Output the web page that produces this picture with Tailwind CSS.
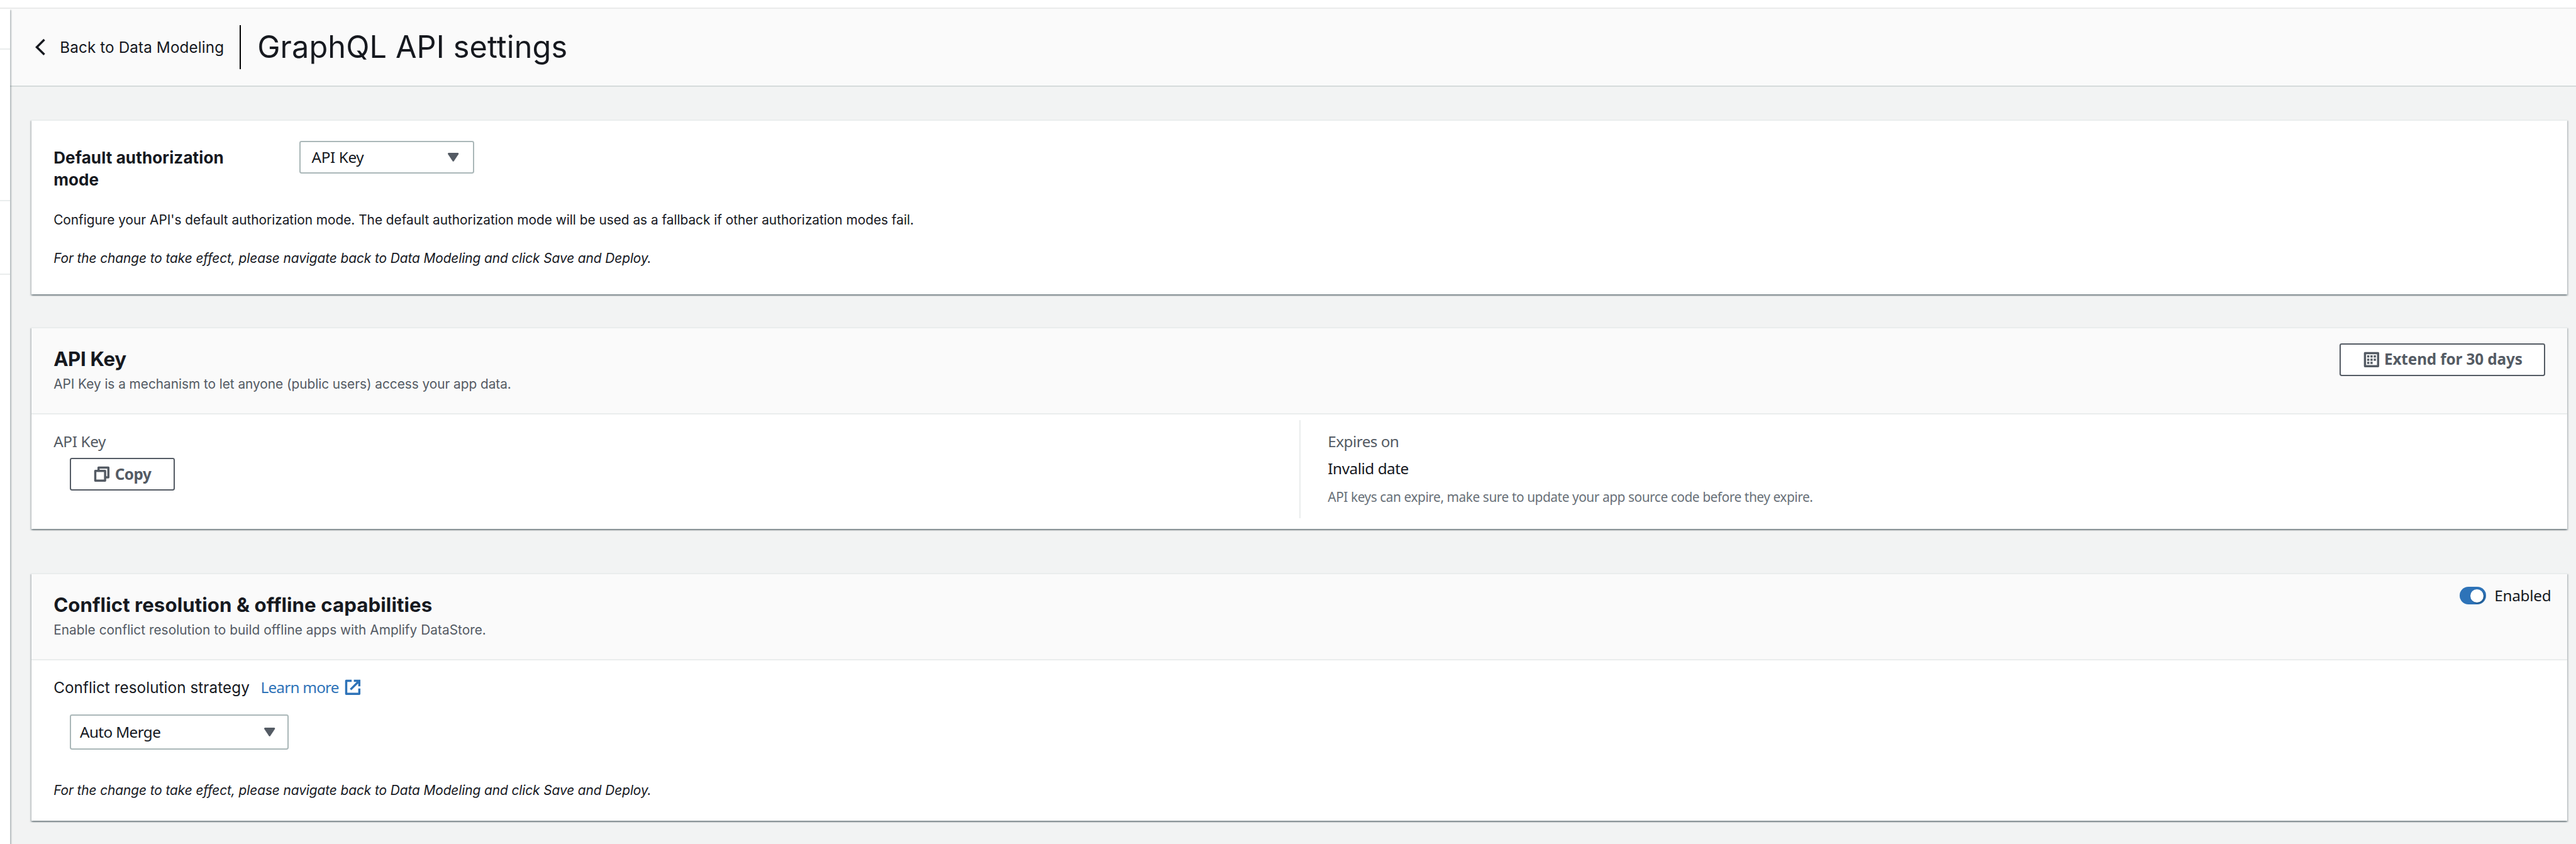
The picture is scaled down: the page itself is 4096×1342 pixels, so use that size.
<!DOCTYPE html>
<html lang="en">
<head>
<meta charset="utf-8">
<title>GraphQL API settings</title>
<script src="https://cdn.jsdelivr.net/npm/@tailwindcss/browser@4"></script>
</head>
<body class="overflow-hidden bg-white">
<div class="[zoom:1.7378] flex h-[773px] w-[2357px] flex-col overflow-hidden bg-[#f2f3f3] font-['Inter',sans-serif] text-sm/5 text-[#16191f]">
  <div class="h-[8.2px] shrink-0 border-b-[1.2px] border-[#eaebeb] bg-white"></div>
  <div class="flex min-h-0 flex-1">

    <!-- collapsed side navigation -->
    <nav class="z-10 flex w-[9px] shrink-0 flex-col bg-white shadow-[1px_1px_1px_0_rgba(0,28,36,0.25)]">
      <div class="h-[37px] border-b-[1.2px] border-[#eaeded]"></div>
      <div class="h-[139px] border-b-[1.2px] border-[#eaeded]"></div>
      <div class="h-[67px] border-b-[1.2px] border-[#eaeded]"></div>
    </nav>

    <div class="min-w-0 flex-1">
      <header class="flex h-[71px] items-center border-b-[1.2px] border-[#d5dbdb] bg-[#fafafa] pl-5">
        <svg class="size-4 shrink-0" viewBox="0 0 16 16" fill="none" stroke="#16191f" stroke-width="2"><path d="M11.8 1.2 4.9 8l6.9 6.8"/></svg>
        <a class="ml-[9.8px] w-[164.7px] whitespace-nowrap tracking-[0.05px]">Back to Data Modeling</a>
        <span class="h-10 w-[1.2px] bg-black"></span>
        <h1 class="ml-[14.8px] text-[28px] leading-9 tracking-[0.063px] whitespace-nowrap">GraphQL API settings</h1>
      </header>

      <main class="pt-[30px] pr-2 pl-5">
        <section class="h-[160px] border-t-[1.2px] border-[#eaeded] bg-white px-5 pt-[18.7px] shadow-[0_1px_1px_0_rgba(0,28,36,0.3),1px_1px_1px_0_rgba(0,28,36,0.15),-1px_1px_1px_0_rgba(0,28,36,0.15)]">
          <div class="flex items-start">
            <h3 class="mr-[45px] w-[180px] pt-[5.6px] text-[15px] leading-5 font-bold tracking-[0.061px]">Default authorization mode</h3>
            <div class="flex h-[30px] w-[160px] items-center justify-between rounded-[2px] border-[1.2px] border-[#aab7b8] bg-white pr-[13px] pl-[10px] font-['Noto_Sans',sans-serif]">
              <span class="tracking-[-0.22px]">API Key</span>
              <svg class="h-2 w-[10px]" viewBox="0 0 10 8" fill="#545b64"><path d="M.7 0h8.6q1 .3.5 1.3L5.6 7.6q-.6.7-1.2 0L.2 1.3Q-.3.3.7 0Z"/></svg>
            </div>
          </div>
          <p class="mt-[17.1px] text-xs/5 tracking-[-0.014px]">Configure your API's default authorization mode. The default authorization mode will be used as a fallback if other authorization modes fail.</p>
          <p class="mt-[15px] text-xs/5 tracking-[-0.043px] italic">For the change to take effect, please navigate back to Data Modeling and click Save and Deploy.</p>
        </section>

        <section class="mt-[30px] h-[185px] border-t-[1.2px] border-[#eaeded] bg-white shadow-[0_1px_1px_0_rgba(0,28,36,0.3),1px_1px_1px_0_rgba(0,28,36,0.15),-1px_1px_1px_0_rgba(0,28,36,0.15)]">
          <div class="flex h-[79px] items-start justify-between border-b-[1.2px] border-[#eaeded] bg-[#fafafa] px-5">
            <div class="pt-[17px]">
              <h2 class="text-lg/6 font-bold tracking-[-0.2px]">API Key</h2>
              <p class="mt-[0.4px] text-xs/5 tracking-[-0.029px] text-[#545b64]">API Key is a mechanism to let anyone (public users) access your app data.</p>
            </div>
            <button class="mt-[13.7px] flex h-[30px] w-[188.5px] items-center gap-[3.8px] rounded-[2px] border-[1.2px] border-[#545b64] bg-white pl-5 font-['Noto_Sans',sans-serif] font-bold tracking-[-0.074px] whitespace-nowrap text-[#545b64]">
              <svg class="size-4 shrink-0" viewBox="0 0 16 16"><rect x="2" y="2" width="12" height="12" fill="none" stroke="#545b64" stroke-width="2" stroke-linejoin="round"/><path fill="#545b64" d="M4 4h2v2H4zM7 4h2v2H7zM10 4h2v2h-2zM4 7h2v2H4zM7 7h2v2H7zM10 7h2v2h-2zM4 10h2v2H4zM7 10h2v2H7z"/></svg>
              Extend for 30 days
            </button>
          </div>
          <div class="flex font-['Noto_Sans',sans-serif]">
            <div class="w-[1160px] pt-[14.6px] pl-5">
              <div class="tracking-[-0.2px] text-[#545b64]">API Key</div>
              <button class="mt-[5px] ml-[15px] flex h-[30px] w-24 items-center gap-1 rounded-[2px] border-[1.2px] border-[#545b64] bg-white pl-5 font-bold tracking-[-0.26px] text-[#545b64]">
                <svg class="size-4 shrink-0" viewBox="0 0 16 16" fill="none" stroke="#545b64" stroke-width="2" stroke-linejoin="round"><path d="M2 5h9v9H2zM5 5V2h9v9h-3"/></svg>
                Copy
              </button>
            </div>
            <div class="mt-[5px] h-[90px] border-l-[1.2px] border-[#eaeded] pt-[9.6px] pl-[24.8px]">
              <div class="tracking-[-0.32px] text-[#545b64]">Expires on</div>
              <div class="mt-[5px] tracking-[-0.27px]">Invalid date</div>
              <div class="mt-[5.7px] text-xs/5 tracking-[-0.252px] text-[#687078]">API keys can expire, make sure to update your app source code before they expire.</div>
            </div>
          </div>
        </section>

        <section class="mt-10 h-[227px] border-t-[1.2px] border-[#eaeded] bg-white shadow-[0_1px_1px_0_rgba(0,28,36,0.3),1px_1px_1px_0_rgba(0,28,36,0.15),-1px_1px_1px_0_rgba(0,28,36,0.15)]">
          <div class="flex h-[79px] items-start justify-between border-b-[1.2px] border-[#eaeded] bg-[#fafafa] pl-5">
            <div class="pt-[17px]">
              <h2 class="text-lg/6 font-bold tracking-[0.037px]">Conflict resolution &amp; offline capabilities</h2>
              <p class="mt-[0.4px] text-xs/5 tracking-[0.011px] text-[#545b64]">Enable conflict resolution to build offline apps with Amplify DataStore.</p>
            </div>
            <label class="mt-[9.7px] flex h-5 w-[98.5px] items-center gap-[7.8px] font-['Noto_Sans',sans-serif] tracking-[-0.15px]">
              <span class="flex h-4 w-6 items-center justify-end rounded-full bg-[#2e73b8] pr-[2px]"><span class="size-3 rounded-full bg-white shadow-[1px_1px_1px_0_rgba(0,28,36,0.3)]"></span></span>
              Enabled
            </label>
          </div>
          <div class="px-5 pt-[14.6px]">
            <div class="flex items-center">
              <span class="w-[189.5px] tracking-[0.028px]">Conflict resolution strategy</span>
              <a class="flex items-center font-['Noto_Sans',sans-serif] text-[#2e73b8]">
                <span class="w-[76px] tracking-[-0.45px] whitespace-nowrap">Learn more</span>
                <svg class="size-4" viewBox="0 0 16 16" fill="none" stroke="#2e73b8" stroke-width="2" stroke-linejoin="round"><path d="M7 2H2v12h12V9"/><path stroke-linejoin="miter" d="M9 2h5v5M14 2 6 10"/></svg>
              </a>
            </div>
            <div class="mt-[15px] ml-[15px] flex h-8 w-[200px] items-center justify-between rounded-[2px] border-[1.2px] border-[#aab7b8] bg-white pr-[11px] pl-2 font-['Noto_Sans',sans-serif]">
              <span class="tracking-[-0.373px]">Auto Merge</span>
              <svg class="h-2 w-[10px]" viewBox="0 0 10 8" fill="#545b64"><path d="M.7 0h8.6q1 .3.5 1.3L5.6 7.6q-.6.7-1.2 0L.2 1.3Q-.3.3.7 0Z"/></svg>
            </div>
            <p class="mt-[27.7px] text-xs/5 tracking-[-0.043px] italic">For the change to take effect, please navigate back to Data Modeling and click Save and Deploy.</p>
          </div>
        </section>
      </main>
    </div>
  </div>
</div>
</body>
</html>
